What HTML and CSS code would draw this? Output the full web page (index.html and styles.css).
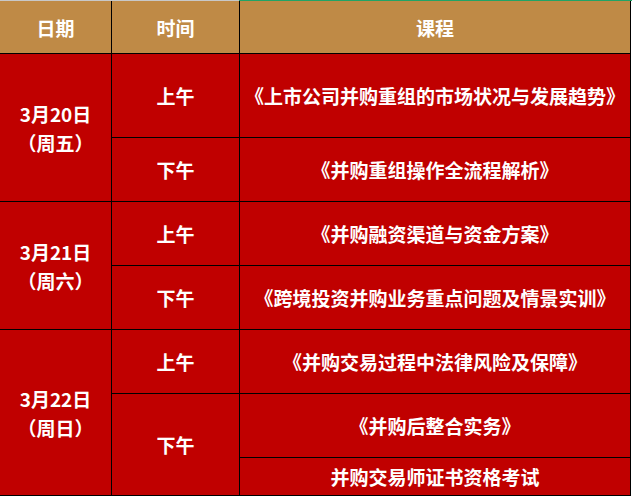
FILE: index.html
```html
<!DOCTYPE html>
<html lang="zh-CN">
<head>
<meta charset="utf-8">
<title>课程安排</title>
<link rel="stylesheet" href="styles.css">
</head>
<body>
<div class="sheet">
  <div class="topline"><span class="gray"></span><span class="green"></span></div>
  <div class="grid">
    <div class="cell head">日期</div>
    <div class="cell head">时间</div>
    <div class="cell head">课程</div>

    <div class="cell date d1">3月20日<br>（周五）</div>
    <div class="cell">上午</div>
    <div class="cell">《上市公司并购重组的市场状况与发展趋势》</div>
    <div class="cell">下午</div>
    <div class="cell">《并购重组操作全流程解析》</div>

    <div class="cell date d2">3月21日<br>（周六）</div>
    <div class="cell">上午</div>
    <div class="cell">《并购融资渠道与资金方案》</div>
    <div class="cell">下午</div>
    <div class="cell">《跨境投资并购业务重点问题及情景实训》</div>

    <div class="cell date d3">3月22日<br>（周日）</div>
    <div class="cell">上午</div>
    <div class="cell">《并购交易过程中法律风险及保障》</div>
    <div class="cell pm2">下午</div>
    <div class="cell">《并购后整合实务》</div>
    <div class="cell">并购交易师证书资格考试</div>
  </div>
</div>
</body>
</html>
```
FILE: styles.css
```css
html, body {
  margin: 0;
  padding: 0;
  background: #ffffff;
}
.sheet {
  width: 632px;
}
.topline {
  display: flex;
  height: 1px;
}
.topline .gray {
  width: 239px;
  background: #c8c8c8;
}
.topline .green {
  flex: 1;
  background: #21a366;
}
.grid {
  width: 630px;
  display: grid;
  grid-template-columns: 111px 127px 390px;
  grid-template-rows: 52px 83px 63px 63px 63px 63px 63px 37px;
  gap: 1px;
  background: #000000;
  border-right: 1px solid #000000;
  border-bottom: 1px solid #000000;
  font-family: "Noto Sans CJK SC", "Noto Sans", sans-serif;
  font-weight: 700;
  font-size: 19px;
  color: #ffffff;
}
.cell {
  background: #c00000;
  display: flex;
  align-items: center;
  justify-content: center;
  text-align: center;
  white-space: nowrap;
}
.cell.head {
  background: #bf8a46;
}
.date {
  line-height: 29px;
}
.d1 { grid-row: 2 / span 2; }
.d2 { grid-row: 4 / span 2; }
.d3 { grid-row: 6 / span 3; }
.pm2 { grid-row: 7 / span 2; grid-column: 2; }
```
